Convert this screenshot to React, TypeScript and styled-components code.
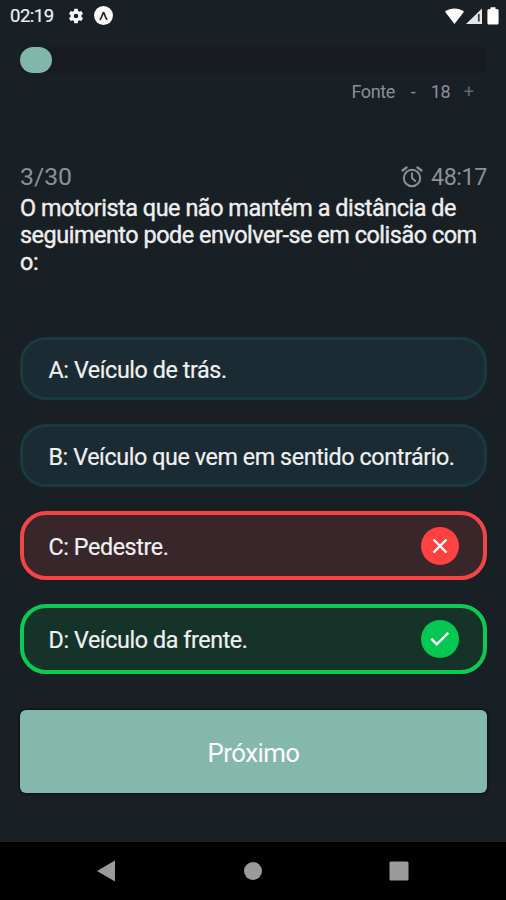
import React from "react";
import styled, { createGlobalStyle } from "styled-components";

const GlobalStyle = createGlobalStyle`
  * { box-sizing: border-box; }
  body { margin: 0; background: #181f25; }
`;

const Screen = styled.div`
  width: 506px;
  height: 900px;
  display: flex;
  flex-direction: column;
  background: #181f25;
  color: #eeeeee;
  font-family: Roboto, "Liberation Sans", sans-serif;
  overflow: hidden;
`;

const StatusBar = styled.header`
  height: 32px;
  flex: none;
  display: flex;
  align-items: center;
  justify-content: space-between;
  padding: 0 7px 0 10px;
`;

const StatusGroup = styled.div<{ $gap: number }>`
  display: flex;
  align-items: center;
  gap: ${(p) => p.$gap}px;
`;

const Clock = styled.span`
  width: 44px;
  margin-right: 4px;
  font-size: 18.5px;
  letter-spacing: -0.5px;
  line-height: 32px;
  white-space: nowrap;
  color: #f0f0f0;
  -webkit-text-stroke: 0.2px #f0f0f0;
`;

const Icon = styled.svg`
  display: block;
  flex: none;
`;

const Content = styled.main`
  flex: 1;
  display: flex;
  flex-direction: column;
  padding: 15px 19px 0 20px;
`;

const Track = styled.div`
  height: 26px;
  border-radius: 8px;
  background: #171b21;
`;

const Progress = styled.div`
  width: 31.5px;
  height: 26px;
  border-radius: 13px;
  background: #80b7a8;
`;

const FontControls = styled.div`
  height: 36px;
  display: flex;
  justify-content: flex-end;
  align-items: center;
  padding-right: 13px;
  font-size: 18px;
  letter-spacing: -0.4px;
  color: #8b9095;
`;

const FontLabel = styled.span`
  margin-right: 16px;
`;

const StepButton = styled.button<{ $dim?: boolean }>`
  border: 0;
  padding: 0;
  background: none;
  font: inherit;
  color: ${(p) => (p.$dim ? "#62686d" : "inherit")};
`;

const FontSize = styled.span`
  margin: 0 13.5px 0 15px;
`;

const QuizInfo = styled.div`
  height: 32px;
  margin-top: 52px;
  display: flex;
  justify-content: space-between;
  align-items: center;
  font-size: 23.3px;
  color: #8c9195;
`;

const Counter = styled.span`
  margin-top: -2px;
  font-size: 24.8px;
`;

const Timer = styled.div`
  display: flex;
  align-items: center;
  gap: 7.5px;
  letter-spacing: -0.4px;
`;

const Question = styled.h1`
  margin: 2px 0 0;
  height: 142px;
  font-size: 23.4px;
  letter-spacing: -0.46px;
  line-height: 27px;
  font-weight: 400;
  white-space: nowrap;
  -webkit-text-stroke: 0.4px #eeeeee;
`;

const Options = styled.div`
  display: flex;
  flex-direction: column;
  gap: 24px;
`;

type State = "idle" | "wrong" | "right";

const palette = {
  idle: { border: "#193a3e", fill: "#1a2b34" },
  wrong: { border: "#f34446", fill: "#38262b" },
  right: { border: "#0ccb55", fill: "#163329" },
};

const Option = styled.button<{ $state: State }>`
  width: 100%;
  height: ${(p) => (p.$state === "idle" ? 63 : 69.4)}px;
  display: flex;
  align-items: center;
  justify-content: space-between;
  padding: 0 ${(p) => (p.$state === "idle" ? "23px 0 25.5px" : "24px 0 24.5px")};
  border: ${(p) => (p.$state === "idle" ? 3 : 4)}px solid ${(p) => palette[p.$state].border};
  border-radius: 26px;
  background: ${(p) => palette[p.$state].fill};
  color: #f0f0f0;
  font: 400 23.3px Roboto, sans-serif;
  letter-spacing: -0.41px;
  white-space: nowrap;
  -webkit-text-stroke: 0.2px #f0f0f0;
`;

const OptionLabel = styled.span`
  padding-top: 2px;
`;

const Badge = styled.span<{ $state: State }>`
  width: 38px;
  height: 38px;
  flex: none;
  display: grid;
  place-items: center;
  border-radius: 50%;
  background: ${(p) => (p.$state === "wrong" ? "#ff4142" : "#04c851")};
`;

const NextButton = styled.button`
  width: 100%;
  height: 83px;
  flex: none;
  margin-top: 36.7px;
  padding: 3px 0 0;
  border: 0;
  border-radius: 6px;
  background: #84b8ab;
  color: #fff;
  font: 400 25.8px Roboto, sans-serif;
  letter-spacing: -0.55px;
  box-shadow: 0 0 2px 1px #0c1214;
`;

const NavBar = styled.nav`
  height: 58.5px;
  flex: none;
  display: flex;
  align-items: center;
  justify-content: space-between;
  padding: 0 97px;
  background: #000;
`;

const SettingsIcon = () => (
  <Icon width="18" height="18" viewBox="0 0 24 24" fill="#f5f5f5">
    <path d="M19.14 12.94c.04-.3.06-.61.06-.94 0-.32-.02-.64-.07-.94l2.03-1.58a.49.49 0 0 0 .12-.61l-1.92-3.32a.49.49 0 0 0-.59-.22l-2.39.96c-.5-.38-1.03-.7-1.62-.94l-.36-2.54a.48.48 0 0 0-.48-.41h-3.84a.48.48 0 0 0-.47.41l-.36 2.54c-.59.24-1.13.57-1.62.94l-2.39-.96a.48.48 0 0 0-.59.22L2.74 8.87a.48.48 0 0 0 .12.61l2.03 1.58c-.05.3-.09.63-.09.94s.02.64.07.94l-2.03 1.58a.49.49 0 0 0-.12.61l1.92 3.32c.12.22.37.29.59.22l2.39-.96c.5.38 1.03.7 1.62.94l.36 2.54c.05.24.24.41.48.41h3.84c.24 0 .44-.17.47-.41l.36-2.54c.59-.24 1.13-.56 1.62-.94l2.39.96c.22.08.47 0 .59-.22l1.92-3.32a.48.48 0 0 0-.12-.61zM12 15a3 3 0 1 1 0-6 3 3 0 0 1 0 6z" />
  </Icon>
);

const ExpoIcon = () => (
  <Icon width="20" height="20" viewBox="0 0 20 20">
    <circle cx="9.5" cy="9.5" r="9.5" fill="#fafafa" />
    <path d="M6.3 13.3c1.5-2.1 2.1-4.8 2.8-6.5.2-.4.6-.4.8 0 .8 1.7 1.4 4.4 2.8 6.5" fill="none" stroke="#262626" strokeWidth="1.7" strokeLinecap="round" />
  </Icon>
);

const WifiIcon = () => (
  <Icon width="19" height="17" viewBox="0 0 19 17">
    <path d="M0 3.7C5.5-.7 13.5-.7 19 3.7L9.500 16z" fill="#fff" />
  </Icon>
);

const SignalIcon = () => (
  <Icon width="17" height="17" viewBox="0 0 17 17">
    <path d="M0 16 16 .5V16z" fill="#e6e6e6" />
    <path d="M12.8 6v7.5" stroke="#3a4045" strokeWidth="1.8" />
  </Icon>
);

const BatteryIcon = () => (
  <Icon width="12" height="18" viewBox="0 0 12 18">
    <path d="M3.500.3h5V2H10q1.600 0 1.600 1.600v12.300q0 1.600-1.600 1.600H2Q.4 17.500.4 15.900V3.600Q.4 2 2 2h1.500z" fill="#fff" />
  </Icon>
);

const AlarmIcon = () => (
  <Icon width="22" height="22" viewBox="0 0 22 22" fill="none" stroke="#8c9195" strokeWidth="2" strokeLinecap="round">
    <circle cx="11" cy="12" r="8.2" />
    <path d="M11 7.2V12l3.300 3" strokeWidth="1.9" />
    <path d="M1.500 4.500 5.600 1.500M20.500 4.500 16.400 1.500" strokeWidth="2.2" />
  </Icon>
);

const CrossIcon = () => (
  <Icon width="16" height="16" viewBox="0 0 16 16">
    <path d="M1.500 1.500l13 13M14.500 1.500l-13 13" stroke="#fff" strokeWidth="2.4" />
  </Icon>
);

const CheckIcon = () => (
  <Icon width="20" height="16" viewBox="0 0 20 16">
    <path d="M1.300 7.700 6.700 13.300 18.300 1.800" fill="none" stroke="#fff" strokeWidth="2.4" />
  </Icon>
);

const options: { label: string; state: State }[] = [
  { label: "A: Veículo de trás.", state: "idle" },
  { label: "B: Veículo que vem em sentido contrário.", state: "idle" },
  { label: "C: Pedestre.", state: "wrong" },
  { label: "D: Veículo da frente.", state: "right" },
];

export default function App() {
  return (
    <Screen>
      <GlobalStyle />
      <StatusBar>
        <StatusGroup $gap={9}>
          <Clock>02:19</Clock>
          <SettingsIcon />
          <ExpoIcon />
        </StatusGroup>
        <StatusGroup $gap={2}>
          <WifiIcon />
          <SignalIcon />
          <span />
          <BatteryIcon />
        </StatusGroup>
      </StatusBar>
      <Content>
        <Track>
          <Progress />
        </Track>
        <FontControls>
          <FontLabel>Fonte</FontLabel>
          <StepButton>-</StepButton>
          <FontSize>18</FontSize>
          <StepButton $dim>+</StepButton>
        </FontControls>
        <QuizInfo>
          <Counter>3/30</Counter>
          <Timer>
            <AlarmIcon />
            <span>48:17</span>
          </Timer>
        </QuizInfo>
        <Question>
          O motorista que não mantém a distância de
          <br />
          seguimento pode envolver-se em colisão com
          <br />
          o:
        </Question>
        <Options>
          {options.map(({ label, state }) => (
            <Option key={label} $state={state}>
              <OptionLabel>{label}</OptionLabel>
              {state !== "idle" && (
                <Badge $state={state}>{state === "wrong" ? <CrossIcon /> : <CheckIcon />}</Badge>
              )}
            </Option>
          ))}
        </Options>
        <NextButton>Próximo</NextButton>
      </Content>
      <NavBar>
        <Icon width="18" height="22" viewBox="0 0 18 22">
          <path d="M0 11 18 .5v21z" fill="#9b9b9b" />
        </Icon>
        <Icon width="20" height="20" viewBox="0 0 20 20">
          <circle cx="11" cy="10" r="9" fill="#9b9b9b" />
        </Icon>
        <Icon width="20" height="20" viewBox="0 0 20 20">
          <rect x=".5" y=".5" width="19" height="19" rx="1.5" fill="#9b9b9b" />
        </Icon>
      </NavBar>
    </Screen>
  );
}
